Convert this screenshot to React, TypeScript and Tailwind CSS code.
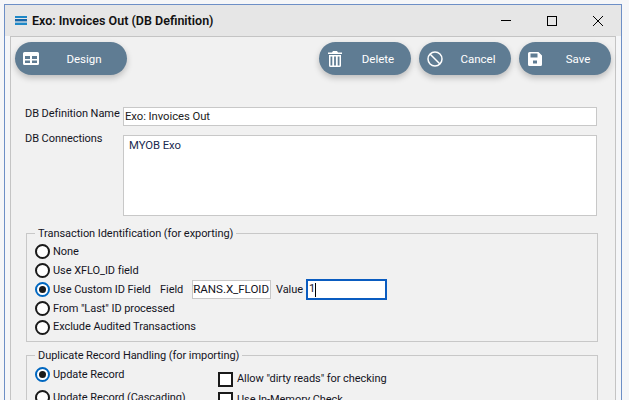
import type { ReactNode } from "react";

const FONT = "font-['Roboto','Open_Sans',sans-serif]";

function ListIcon() {
  return (
    <svg width="12" height="9" viewBox="0 0 12 9" className="shrink-0" aria-hidden>
      <rect x="0" y="0" width="12" height="2" fill="#1e88c7" />
      <rect x="0" y="3" width="12" height="2.4" fill="#1565a8" />
      <rect x="0" y="6.6" width="12" height="2.4" fill="#1e88c7" />
    </svg>
  );
}

function TableIcon() {
  return (
    <svg width="16" height="13" viewBox="0 0 16 13" aria-hidden>
      <path
        fill="#fff"
        fillRule="evenodd"
        d="M1.5 0h13A1.5 1.5 0 0 1 16 1.5v10a1.5 1.5 0 0 1-1.5 1.5h-13A1.5 1.5 0 0 1 0 11.5v-10A1.5 1.5 0 0 1 1.5 0ZM2 4v3h5V4H2Zm7 0v3h5V4H9ZM2 8.5V11h5V8.5H2Zm7 0V11h5V8.5H9Z"
      />
    </svg>
  );
}

function TrashIcon() {
  return (
    <svg width="14" height="16" viewBox="0 0 14 16" aria-hidden>
      <path
        fill="#fff"
        fillRule="evenodd"
        d="M5 0h4l1 1.5h4V3H0V1.5h4L5 0ZM1 4h12v10.5a1.5 1.5 0 0 1-1.5 1.5h-9A1.5 1.5 0 0 1 1 14.5V4Zm1.5 1.5v9h1.8v-9H2.5Zm3.6 0v9h1.8v-9H6.100Zm3.600 0v9h1.8v-9H9.700Z"
      />
    </svg>
  );
}

function BanIcon() {
  return (
    <svg width="16" height="16" viewBox="0 0 16 16" fill="none" stroke="#fff" strokeWidth="1.5" aria-hidden>
      <circle cx="8" cy="8" r="7" />
      <path d="M3 3l10 10" />
    </svg>
  );
}

function SaveIcon() {
  return (
    <svg width="14" height="14" viewBox="0 0 14 14" aria-hidden>
      <path
        fill="#fff"
        fillRule="evenodd"
        d="M1.5 0H10.500L14 3.500V12.500A1.500 1.500 0 0 1 12.500 14H1.500A1.500 1.500 0 0 1 0 12.500V1.500A1.500 1.500 0 0 1 1.500 0ZM2.500 1.500V5.500H9.500V1.500H2.500ZM5 8.500V11.500H9V8.500H5Z"
      />
    </svg>
  );
}

function PillButton({ icon, label, className }: { icon: ReactNode; label: string; className: string }) {
  return (
    <button
      className={`flex h-[33px] items-center rounded-full bg-[#5f7c93] px-[3px] text-[11.5px] text-white shadow-[0_3px_6px_rgba(0,0,0,0.22)] ${className}`}
    >
      <span className="flex w-[26px] justify-center">{icon}</span>
      <span className="flex-1 pt-[2px] text-center">{label}</span>
    </button>
  );
}

function Radio({ label, checked }: { label: string; checked?: boolean }) {
  return (
    <span className="flex items-center gap-[3px] whitespace-nowrap">
      <span
        className={`flex size-[15px] shrink-0 items-center justify-center rounded-full border-2 bg-white ${
          checked ? "border-[#0067c0]" : "border-[#1a1a1a]"
        }`}
      >
        {checked && <span className="size-[7px] rounded-full bg-[#1a1a1a]" />}
      </span>
      <span className="pt-[1px]">{label}</span>
    </span>
  );
}

function Checkbox({ label }: { label: string }) {
  return (
    <span className="flex items-center gap-[4px] whitespace-nowrap">
      <span className="size-[15px] shrink-0 border-2 border-[#1a1a1a] bg-white" />
      <span>{label}</span>
    </span>
  );
}

export default function App() {
  return (
    <div className={`h-[400px] w-[629px] overflow-hidden bg-[#f5f6f8] pt-[4px] pr-[7px] pl-[4px] text-[11px] tracking-[-0.06px] text-[#14141e] ${FONT}`}>
      <div className="flex h-[396px] flex-col border-x border-t border-[#6d8fc6]">
        {/* title bar */}
        <div className="flex h-[31px] shrink-0 items-center bg-[#e6e6e6] pl-[10px]">
          <ListIcon />
          <span className="ml-[5px] pt-[1px] text-[12.5px] font-semibold tracking-normal text-[#111]">
            Exo: Invoices Out (DB Definition)
          </span>
          <div className="ml-auto flex items-center">
            <span className="flex w-[46px] justify-center">
              <span className="h-px w-[10px] bg-black" />
            </span>
            <span className="flex w-[46px] justify-center">
              <span className="size-[10px] border border-black" />
            </span>
            <span className="flex w-[46px] justify-center">
              <svg width="10" height="10" viewBox="0 0 10 10" stroke="#000" strokeWidth="1" aria-hidden>
                <path d="M0 0l10 10M10 0L0 10" />
              </svg>
            </span>
          </div>
        </div>

        <div className="flex min-h-0 flex-1 px-[5px]">
          <div className="flex min-w-0 flex-1 flex-col border-x border-t border-[#c4c4c4] bg-[#f1f1f1]">
            {/* toolbar */}
            <div className="flex shrink-0 gap-[8px] px-[4px] pt-[5px] tracking-normal">
              <PillButton icon={<TableIcon />} label="Design" className="mr-auto w-[112px]" />
              <PillButton icon={<TrashIcon />} label="Delete" className="w-[92px]" />
              <PillButton icon={<BanIcon />} label="Cancel" className="w-[92px]" />
              <PillButton icon={<SaveIcon />} label="Save" className="w-[92px]" />
            </div>

            {/* form */}
            <div className="mt-[32px] flex flex-col pl-[14px]">
              <div className="flex">
                <span className="-mt-[1px] w-[98px] leading-[15px] whitespace-nowrap">DB Definition Name</span>
                <div className="flex h-[19px] w-[474px] items-center border border-[#c8c8c8] bg-white pt-[1px] pl-[1px] text-[11.3px] text-[#222]">
                  Exo: Invoices Out
                </div>
              </div>
              <div className="mt-[9px] flex">
                <span className="-mt-[4px] w-[98px] leading-[15px] whitespace-nowrap">DB Connections</span>
                <div className="h-[81px] w-[474px] border border-[#c8c8c8] bg-white pt-[2px] pl-[5px] text-[11.3px] leading-[16px] text-[#1a2a50]">
                  MYOB Exo
                </div>
              </div>

              <fieldset className="mt-[8px] ml-[1px] h-[118px] w-[572px] border border-[#c8c8c8]">
                <legend className="ml-[8px] px-[3px] pt-[2px] leading-[16px]">Transaction Identification (for exporting)</legend>
                <div className="flex flex-col pl-[8px]">
                  <div className="flex h-[19px] items-center">
                    <Radio label="None" />
                  </div>
                  <div className="flex h-[19px] items-center">
                    <Radio label="Use XFLO_ID field" />
                  </div>
                  <div className="flex h-[19px] items-center">
                    <span className="w-[125px]">
                      <Radio label="Use Custom ID Field" checked />
                    </span>
                    <span className="w-[32px] pt-[1px]">Field</span>
                    <div className="flex h-[19px] w-[79px] items-center justify-end overflow-hidden border border-[#c8c8c8] bg-white pt-[1px] pr-[1px] text-[11.6px] whitespace-nowrap">
                      TRANS.X_FLOID
                    </div>
                    <span className="ml-[5px] w-[30px] pt-[1px]">Value</span>
                    <div className="flex h-[21px] w-[81px] items-center border-2 border-[#0a5cc0] bg-white pl-[1px]">
                      1<span className="h-[14px] w-px bg-black" />
                    </div>
                  </div>
                  <div className="flex h-[19px] items-center">
                    <Radio label={'From "Last" ID processed'} />
                  </div>
                  <div className="flex h-[18px] items-center">
                    <Radio label="Exclude Audited Transactions" />
                  </div>
                </div>
              </fieldset>

              <fieldset className="mt-[4px] ml-[1px] h-[80px] w-[572px] border border-[#c8c8c8]">
                <legend className="ml-[8px] px-[3px] pt-[2px] leading-[16px]">Duplicate Record Handling (for importing)</legend>
                <div className="flex pt-[2px] pl-[8px]">
                  <div className="flex w-[183px] flex-col gap-[5px]">
                    <Radio label="Update Record" checked />
                    <Radio label="Update Record (Cascading)" />
                  </div>
                  <div className="flex flex-col gap-[4px] pt-[5px]">
                    <Checkbox label={'Allow "dirty reads" for checking'} />
                    <Checkbox label="Use In-Memory Check" />
                  </div>
                </div>
              </fieldset>
            </div>
          </div>
        </div>
      </div>
    </div>
  );
}
